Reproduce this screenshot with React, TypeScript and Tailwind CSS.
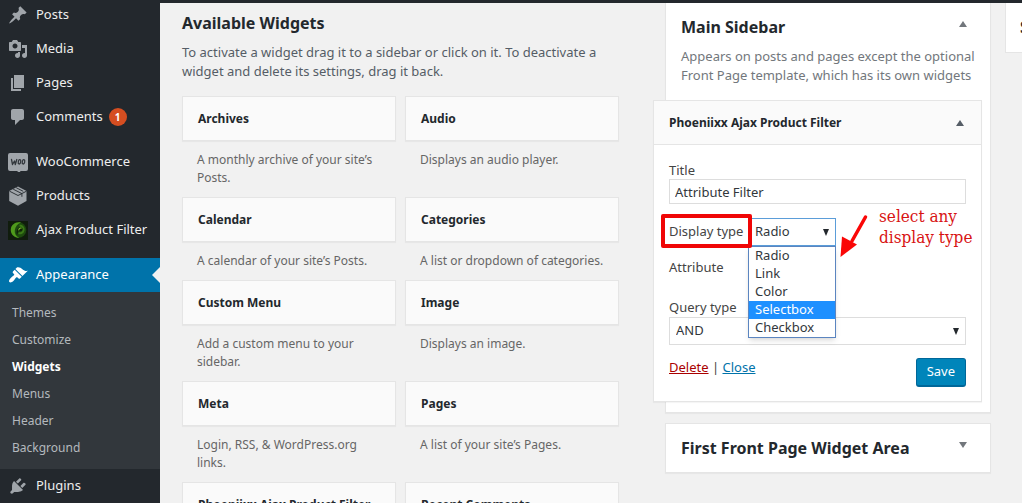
import React, { useState } from "react";

type MenuEntry = { label: string; icon: React.ReactNode; badge?: string };

function Dashicon({ d }: { d: string }) {
  return (
    <svg viewBox="0 0 20 20" className="size-5" fill="currentColor" aria-hidden="true">
      <path d={d} />
    </svg>
  );
}

const icons = {
  post: "M10.44 3.02l1.82-1.82 6.36 6.35-1.83 1.82c-1.05-.68-2.48-.57-3.41.36l-.75.75c-.92.93-1.04 2.35-.35 3.41l-1.83 1.82-2.41-2.41-2.8 2.79c-.42.42-3.38 2.71-3.8 2.29s1.86-3.39 2.28-3.81l2.79-2.79L4.1 9.36l1.83-1.82c1.05.69 2.48.57 3.4-.36l.75-.75c.93-.92 1.05-2.35.36-3.41z",
  media: "M13 11V4c0-.55-.45-1-1-1h-1.67L9 1H5L3.67 3H2c-.55 0-1 .45-1 1v7c0 .55.45 1 1 1h10c.55 0 1-.45 1-1zM7 4.5c1.38 0 2.5 1.12 2.5 2.5S8.38 9.5 7 9.5 4.5 8.38 4.5 7 5.62 4.5 7 4.5zM14 6h5v10.5c0 1.38-1.12 2.5-2.5 2.5S14 17.88 14 16.5s1.12-2.5 2.5-2.5c.17 0 .34.02.5.05V9h-3V6zm-4 8.05V13h2v3.5c0 1.38-1.12 2.5-2.5 2.5S7 17.88 7 16.5 8.12 14 9.5 14c.17 0 .34.02.5.05z",
  page: "M6 15V2h10v13H6zm-1 1h8v2H3V5h2v11z",
  comments: "M5 2h9c1.1 0 2 .9 2 2v7c0 1.1-.9 2-2 2h-2l-5 5v-5H5c-1.1 0-2-.9-2-2V4c0-1.1.9-2 2-2z",
  appearance: "M14.48 11.06L7.41 3.99l1.5-1.5c.5-.56 2.3-.47 3.51.32 1.21.8 1.43 1.28 2.91 2.1 1.18.64 2.45 1.26 4.45.85zm-.71.71L6.7 4.7 4.93 6.47c-.39.39-.39 1.02 0 1.41l1.06 1.06c.39.39.39 1.03 0 1.42-.6.6-1.43 1.11-2.21 1.69-.35.26-.7.53-1.01.84C1.43 14.23.4 16.08 1.4 17.07c.99 1 2.84-.03 4.18-1.36.31-.31.58-.66.85-1.02.57-.78 1.08-1.61 1.69-2.21.39-.39 1.02-.39 1.41 0l1.06 1.06c.39.39 1.02.39 1.41 0z",
  plugins: "M13.11 4.36L9.87 7.6 8 5.73l3.24-3.24c.35-.34 1.05-.2 1.56.32.52.51.66 1.21.31 1.55zm-8 1.77l.91-1.12 9.01 9.01-1.19.84c-.71.71-2.63 1.16-3.82 1.16H6.14L4.9 17.26c-.59.59-1.54.59-2.12 0-.59-.58-.59-1.53 0-2.12l1.24-1.24v-3.88c0-1.13.4-3.19 1.09-3.89zm7.26 3.97l3.24-3.24c.34-.35 1.04-.21 1.55.31.52.51.66 1.21.31 1.55l-3.24 3.25z",
};

function WooIcon() {
  return (
    <svg viewBox="0 0 20 20" className="size-5" aria-hidden="true">
      <path d="M2 1h16a2 2 0 0 1 2 2v14a2 2 0 0 1-2 2h-5.500l-1 2-2.500-2H2a2 2 0 0 1-2-2V3a2 2 0 0 1 2-2z" fill="currentColor" />
      <g fill="none" stroke="#32373c" strokeWidth="1.300" strokeLinecap="round" strokeLinejoin="round">
        <path d="M3.500 7.500l1 5 2-3.500.8 3.500 1.500-5" />
        <ellipse cx="11.500" cy="9.800" rx="1.200" ry="2.200" transform="rotate(12 11.500 9.800)" />
        <ellipse cx="15.500" cy="9.800" rx="1.200" ry="2.200" transform="rotate(12 15.500 9.800)" />
      </g>
    </svg>
  );
}

function ProductsIcon() {
  return (
    <svg viewBox="0 0 20 20" className="size-5" aria-hidden="true">
      <path d="M10 0.500L18.500 5v10L10 19.800 1.200 15V5z" fill="currentColor" />
      <path d="M1.500 5.200L10 9.500l8.500-4.300M5.200 3.200l8.700 4.400v3.200M8.200 1.700l7 3.600" fill="none" stroke="#23282d" strokeWidth="0.900" />
    </svg>
  );
}

function SwirlIcon() {
  return (
    <svg viewBox="0 0 20 20" className="size-5" aria-hidden="true">
      <rect y="1" width="20" height="19" fill="#101c0d" />
      <circle cx="10.500" cy="10" r="7.800" fill="#1d4a0e" />
      <path d="M13 2.500C7.500 1.500 2.800 5 2.800 10c0 4.500 3.700 7.800 8.500 8-3.300-1.700-5-4.500-4.500-7.700C7.300 6.600 9.500 4 13 2.500z" fill="#4f9a1c" />
      <path d="M11.500 5.500c3 .2 4.500 2.300 4 4.800-.5 2.400-2.700 3.500-5 2.800" fill="none" stroke="#3b7a16" strokeWidth="2" />
      <path d="M9 15.500c-1.200-4 .2-8 3.300-8.200 1.800 0 2.700 1.500 2 2.900-.7 1.300-2.300 1.400-3.600.6-.7 1.200-1 2.700-1.700 4.700z" fill="#0f2209" />
      <path d="M10.800 10c.2-1.500 1.200-2.200 2.300-1.900" fill="none" stroke="#7cc52e" strokeWidth="1.100" strokeLinecap="round" />
    </svg>
  );
}

const contentMenu: MenuEntry[] = [
  { label: "Posts", icon: <Dashicon d={icons.post} /> },
  { label: "Media", icon: <Dashicon d={icons.media} /> },
  { label: "Pages", icon: <Dashicon d={icons.page} /> },
  { label: "Comments", icon: <Dashicon d={icons.comments} />, badge: "1" },
];

const shopMenu: MenuEntry[] = [
  { label: "WooCommerce", icon: <WooIcon /> },
  { label: "Products", icon: <ProductsIcon /> },
  { label: "Ajax Product Filter", icon: <SwirlIcon /> },
];

const appearanceMenu = ["Themes", "Customize", "Widgets", "Menus", "Header", "Background"];

const widgets = [
  ["Archives", "A monthly archive of your site’s Posts."],
  ["Audio", "Displays an audio player."],
  ["Calendar", "A calendar of your site’s Posts."],
  ["Categories", "A list or dropdown of categories."],
  ["Custom Menu", "Add a custom menu to your sidebar."],
  ["Image", "Displays an image."],
  ["Meta", "Login, RSS, & WordPress.org links."],
  ["Pages", "A list of your site’s Pages."],
  ["Phoeniixx Ajax Product Filter", ""],
  ["Recent Comments", ""],
];

const displayTypes = ["Radio", "Link", "Color", "Selectbox", "Checkbox"];

function MenuItem({ label, icon, badge }: MenuEntry) {
  return (
    <li>
      <a href="#" className="flex h-[34px] items-center gap-2 pl-2 text-[13px] whitespace-nowrap text-[#eeeeee]">
        <span className="shrink-0 text-[#a0a5aa]">{icon}</span>
        <span className="flex items-center gap-1.5">
          {label}
          {badge && (
            <span className="flex size-[18px] items-center justify-center rounded-full bg-[#d54e21] text-[10px] font-bold text-white">
              {badge}
            </span>
          )}
        </span>
      </a>
    </li>
  );
}

function Triangle({ down = false, className }: { down?: boolean; className: string }) {
  return (
    <svg viewBox="0 0 8 6" preserveAspectRatio="none" className={className} fill="currentColor" aria-hidden="true">
      <path d={down ? "M0 0h8L4 6z" : "M0 6h8L4 0z"} />
    </svg>
  );
}

function AdminMenu() {
  return (
    <nav className="w-40 shrink-0 bg-[#23282d]">
      <ul className="-mt-0.5">
        {contentMenu.map((item) => (
          <MenuItem key={item.label} {...item} />
        ))}
      </ul>
      <ul className="mt-[11px] mb-[11px]">
        {shopMenu.map((item) => (
          <MenuItem key={item.label} {...item} />
        ))}
      </ul>
      <a href="#" className="relative flex h-[34px] items-center gap-2 bg-[#0073aa] pl-2 text-[13px] text-white">
        <Dashicon d={icons.appearance} />
        Appearance
        <span className="absolute top-1/2 right-0 -translate-y-1/2 border-y-8 border-r-8 border-y-transparent border-r-[#f1f1f1]" />
      </a>
      <ul className="bg-[#32373c] pt-[7px] pb-2">
        {appearanceMenu.map((label) => (
          <li key={label}>
            <a
              href="#"
              className={
                label === "Widgets"
                  ? "flex h-[27px] items-center pl-3 text-xs font-bold text-white"
                  : "flex h-[27px] items-center pl-3 text-xs text-[#b4b9be]"
              }
            >
              {label}
            </a>
          </li>
        ))}
      </ul>
      <ul>
        <MenuItem label="Plugins" icon={<Dashicon d={icons.plugins} />} />
      </ul>
    </nav>
  );
}

function AvailableWidgets() {
  return (
    <section className="min-w-0 flex-1">
      <h2 className="pt-2 text-base leading-6 font-bold text-[#23282d]">Available Widgets</h2>
      <p className="mt-2 text-[13px] leading-[19px] text-[#555d66]">
        To activate a widget drag it to a sidebar or click on it. To deactivate a widget and delete its settings, drag
        it back.
      </p>
      <div className="mt-[15px] grid grid-cols-2 gap-x-[9px]">
        {widgets.map(([name, description]) => (
          <article key={name}>
            <h3 className="flex h-[45px] items-center border border-[#e5e5e5] bg-[#fafafa] px-[15px] text-xs font-bold whitespace-nowrap text-[#23282d] shadow-[0_1px_1px_rgba(0,0,0,0.04)]">
              {name}
            </h3>
            {description && <p className="px-[15px] py-2.5 text-xs leading-[18px] text-[#666666]">{description}</p>}
          </article>
        ))}
      </div>
    </section>
  );
}

function Annotation() {
  return (
    <div className="pointer-events-none absolute -top-3 left-[170px] flex gap-2.5 text-[#d81313]">
      <svg viewBox="0 0 30 44" className="mt-2 h-11 w-[30px]" aria-hidden="true">
        <path d="M26.500 3L13 27" stroke="#fa0707" strokeWidth="3.500" strokeLinecap="round" />
        <path d="M1.500 43L3 22.500l15 8z" fill="#fa0707" />
      </svg>
      <p className="font-['DejaVu_Serif_Condensed','DejaVu_Serif',serif] text-[17px] leading-[21px] whitespace-nowrap">
        select any
        <br />
        display type
      </p>
    </div>
  );
}

function FilterWidget() {
  const [type, setType] = useState("Radio");
  return (
    <div className="relative mt-[15px] mr-2 -ml-[13px] border border-[#e5e5e5] bg-white shadow-[0_1px_1px_rgba(0,0,0,0.04)]">
      <header className="flex h-11 items-center justify-between border-b border-[#e5e5e5] bg-[#fafafa] pr-[17px] pl-[15px]">
        <h3 className="text-xs font-bold text-[#23282d]">Phoeniixx Ajax Product Filter</h3>
        <button type="button" aria-label="Collapse widget">
          <Triangle className="h-1.5 w-2 text-[#555d66]" />
        </button>
      </header>
      <form className="px-[15px] pt-4 pb-3.5 text-[13px] text-[#444444]" onSubmit={(e) => e.preventDefault()}>
        <label htmlFor="filter-title" className="block h-[18px] leading-[18px]">
          Title
        </label>
        <input
          id="filter-title"
          defaultValue="Attribute Filter"
          className="block h-[25px] w-full border border-[#dddddd] bg-white px-[5px] text-[13px] text-[#32373c] outline-none"
        />
        <div className="relative mt-3.5 flex h-7 items-center">
          <label htmlFor="display-type" className="w-[79px]">
            Display type
          </label>
          <div className="relative flex items-center">
            <select
              id="display-type"
              value={type}
              onChange={(e) => setType(e.target.value)}
              className="h-7 w-[88px] appearance-none border border-[#5b9dd9] bg-white pl-1.5 text-[13px] text-[#32373c] outline-none"
            >
              {displayTypes.map((t) => (
                <option key={t}>{t}</option>
              ))}
            </select>
            <Triangle down className="pointer-events-none absolute right-[7px] h-[7px] w-1.5 text-[#23282d]" />
            <ul
              role="listbox"
              aria-label="Display type options"
              className="absolute top-7 left-0 z-10 w-[88px] border border-[#5b85c0] bg-white text-[13px] leading-[17px] text-[#32373c] shadow-md"
            >
              {displayTypes.map((t) => (
                <li
                  key={t}
                  role="option"
                  aria-selected={t === "Selectbox"}
                  onClick={() => setType(t)}
                  className={t === "Selectbox" ? "h-[18px] bg-[#1e90ff] pl-1.5 text-white" : "h-[18px] pl-1.5"}
                >
                  {t}
                </li>
              ))}
            </ul>
          </div>
          <span className="pointer-events-none absolute -top-1 -left-2 z-20 h-[34px] w-[91px] rounded-xs border-4 border-[#f00606]" />
          <Annotation />
        </div>
        <p className="mt-3 leading-[18px]">Attribute</p>
        <label htmlFor="query-type" className="mt-[22px] block h-[19px] leading-[18px]">
          Query type
        </label>
        <div className="relative flex items-center">
          <select
            id="query-type"
            className="h-7 w-full appearance-none border border-[#dddddd] bg-white pl-1.5 text-[13px] text-[#32373c] outline-none"
          >
            <option>AND</option>
            <option>OR</option>
          </select>
          <Triangle down className="pointer-events-none absolute right-[7px] h-[7px] w-1.5 text-[#23282d]" />
        </div>
        <div className="mt-[13px] flex items-start justify-between">
          <p className="leading-[18px]">
            <a href="#" className="text-[#aa0000] underline">
              Delete
            </a>
            {" | "}
            <a href="#" className="text-[#0073aa] underline">
              Close
            </a>
          </p>
          <button
            type="submit"
            className="h-[29px] rounded-[3px] border border-b-2 border-[#006799] bg-[#0085ba] px-2.5 text-[13px] text-white"
          >
            Save
          </button>
        </div>
      </form>
    </div>
  );
}

function Sidebars() {
  return (
    <div className="w-[326px] shrink-0 pb-8">
      <section className="border border-t-0 border-[#e5e5e5] bg-white pb-2.5 shadow-[0_1px_1px_rgba(0,0,0,0.04)]">
        <div className="flex items-start justify-between pt-3 pr-[23px] pl-[15px]">
          <h2 className="text-base leading-6 font-bold text-[#23282d]">Main Sidebar</h2>
          <button type="button" aria-label="Collapse Main Sidebar" className="mt-1.5">
            <Triangle className="h-1.5 w-2 text-[#72777c]" />
          </button>
        </div>
        <p className="mt-2 pr-2 pl-[15px] text-[13px] leading-[19px] text-[#72777c]">
          Appears on posts and pages except the optional Front Page template, which has its own widgets
        </p>
        <FilterWidget />
      </section>
      <section className="mt-2.5 flex h-[50px] items-start justify-between border border-[#e5e5e5] bg-white pt-3 pr-[23px] pl-[15px] shadow-[0_1px_1px_rgba(0,0,0,0.04)]">
        <h2 className="text-base leading-6 font-bold whitespace-nowrap text-[#23282d]">
          First Front Page Widget Area
        </h2>
        <button type="button" aria-label="Expand First Front Page Widget Area" className="mt-1.5">
          <Triangle down className="h-1.5 w-2 text-[#72777c]" />
        </button>
      </section>
    </div>
  );
}

export default function App() {
  return (
    <div className="flex h-screen overflow-hidden bg-[#f1f1f1] font-['Noto_Sans',sans-serif]">
      <AdminMenu />
      <div className="flex min-w-0 flex-1 flex-col">
        <div className="h-[3px] shrink-0 bg-[#23282d]" />
        <main className="flex min-h-0 flex-1 pl-[22px]">
          <AvailableWidgets />
          <div className="w-[46px] shrink-0" />
          <Sidebars />
          <div className="ml-3.5 w-[17px] shrink-0 overflow-hidden">
            <section className="h-[50px] w-80 border border-t-0 border-[#e5e5e5] bg-white pt-3 pl-3.5">
              <h2 className="text-base leading-6 font-bold text-[#23282d]">S</h2>
            </section>
          </div>
        </main>
      </div>
    </div>
  );
}
